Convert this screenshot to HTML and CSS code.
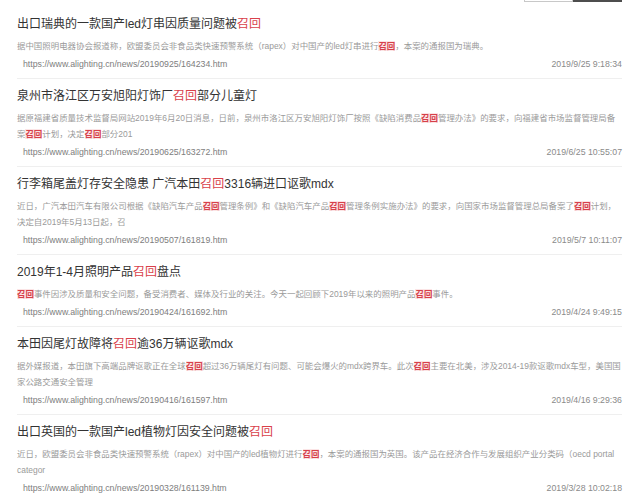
FILE: index.html
```html
<!DOCTYPE html>
<html lang="zh-CN">
<head>
<meta charset="utf-8">
<title>召回新闻</title>
<link rel="stylesheet" href="styles.css">
</head>
<body>
<div class="page">
  <div class="topbar">
    <div class="search-input"></div>
    <div class="search-btn"></div>
  </div>
  <ul class="list">
    <li class="item">
      <h3 class="title">出口瑞典的一款国产led灯串因质量问题被<span class="hl">召回</span></h3>
      <p class="desc">据中国照明电器协会报道称，欧盟委员会非食品类快速预警系统（rapex）对中国产的led灯串进行<em class="hl-d">召回</em>，本案的通报国为瑞典。</p>
      <div class="meta"><span class="url">https://www.alighting.cn/news/20190925/164234.htm</span><span class="date">2019/9/25 9:18:34</span></div>
    </li>
    <li class="item">
      <h3 class="title">泉州市洛江区万安旭阳灯饰厂<span class="hl">召回</span>部分儿童灯</h3>
      <p class="desc">据原福建省质量技术监督局网站2019年6月20日消息，日前，泉州市洛江区万安旭阳灯饰厂按照《缺陷消费品<em class="hl-d">召回</em>管理办法》的要求，向福建省市场监督管理局备案<em class="hl-d">召回</em>计划，决定<em class="hl-d">召回</em>部分201</p>
      <div class="meta"><span class="url">https://www.alighting.cn/news/20190625/163272.htm</span><span class="date">2019/6/25 10:55:07</span></div>
    </li>
    <li class="item">
      <h3 class="title">行李箱尾盖灯存安全隐患 广汽本田<span class="hl">召回</span>3316辆进口讴歌mdx</h3>
      <p class="desc">近日，广汽本田汽车有限公司根据《缺陷汽车产品<em class="hl-d">召回</em>管理条例》和《缺陷汽车产品<em class="hl-d">召回</em>管理条例实施办法》的要求，向国家市场监督管理总局备案了<em class="hl-d">召回</em>计划，决定自2019年5月13日起，召</p>
      <div class="meta"><span class="url">https://www.alighting.cn/news/20190507/161819.htm</span><span class="date">2019/5/7 10:11:07</span></div>
    </li>
    <li class="item">
      <h3 class="title">2019年1-4月照明产品<span class="hl">召回</span>盘点</h3>
      <p class="desc"><em class="hl-d">召回</em>事件因涉及质量和安全问题，备受消费者、媒体及行业的关注。今天一起回顾下2019年以来的照明产品<em class="hl-d">召回</em>事件。</p>
      <div class="meta"><span class="url">https://www.alighting.cn/news/20190424/161692.htm</span><span class="date">2019/4/24 9:49:15</span></div>
    </li>
    <li class="item">
      <h3 class="title">本田因尾灯故障将<span class="hl">召回</span>逾36万辆讴歌mdx</h3>
      <p class="desc">据外媒报道，本田旗下高端品牌讴歌正在全球<em class="hl-d">召回</em>超过36万辆尾灯有问题、可能会爆火的mdx跨界车。此次<em class="hl-d">召回</em>主要在北美，涉及2014-19款讴歌mdx车型，美国国家公路交通安全管理</p>
      <div class="meta"><span class="url">https://www.alighting.cn/news/20190416/161597.htm</span><span class="date">2019/4/16 9:29:36</span></div>
    </li>
    <li class="item">
      <h3 class="title">出口英国的一款国产led植物灯因安全问题被<span class="hl">召回</span></h3>
      <p class="desc">近日，欧盟委员会非食品类快速预警系统（rapex）对中国产的led植物灯进行<em class="hl-d">召回</em>，本案的通报国为英国。该产品在经济合作与发展组织产业分类码（oecd portal categor</p>
      <div class="meta"><span class="url">https://www.alighting.cn/news/20190328/161139.htm</span><span class="date">2019/3/28 10:02:18</span></div>
    </li>
  </ul>
</div>
</body>
</html>
```

FILE: styles.css
```css
* { box-sizing: border-box; }
html, body { margin: 0; padding: 0; background: #fff; }
body {
  font-family: "Liberation Sans", "Noto Sans CJK SC", sans-serif;
  color: #333;
}
.page {
  width: 640px;
  padding: 0 18px 0 17px;
}
.topbar {
  display: flex;
  justify-content: flex-end;
  height: 2px;
  margin-bottom: 5px;
}
.search-input {
  width: 49px;
  height: 2px;
  border: 1px solid #c8c8c8;
  border-top: none;
}
.search-btn {
  width: 49px;
  height: 2px;
  background: #4d4d4d;
}
.list {
  list-style: none;
  margin: 0;
  padding: 0;
}
.item {
  padding: 7px 0 6px;
  border-bottom: 1px solid #efefef;
}
.title {
  margin: 0;
  font-size: 12px;
  line-height: 20px;
  font-weight: 400;
  color: #333;
  white-space: nowrap;
}
.hl { color: #d9414a; }
.desc {
  margin: 4px 0 0;
  font-size: 8.45px;
  line-height: 16px;
  color: #9a9a9a;
}
.hl-d {
  font-style: normal;
  font-weight: 700;
  color: #d6404a;
  background: #fbe4e5;
}
.meta {
  margin-top: 2px;
  display: flex;
  justify-content: space-between;
  align-items: center;
  height: 16px;
  font-size: 8.75px;
  line-height: 16px;
  color: #858585;
}
.url { padding-left: 6px; color: #7d7d7d; }
.date { color: #8a8a8a; }
```
